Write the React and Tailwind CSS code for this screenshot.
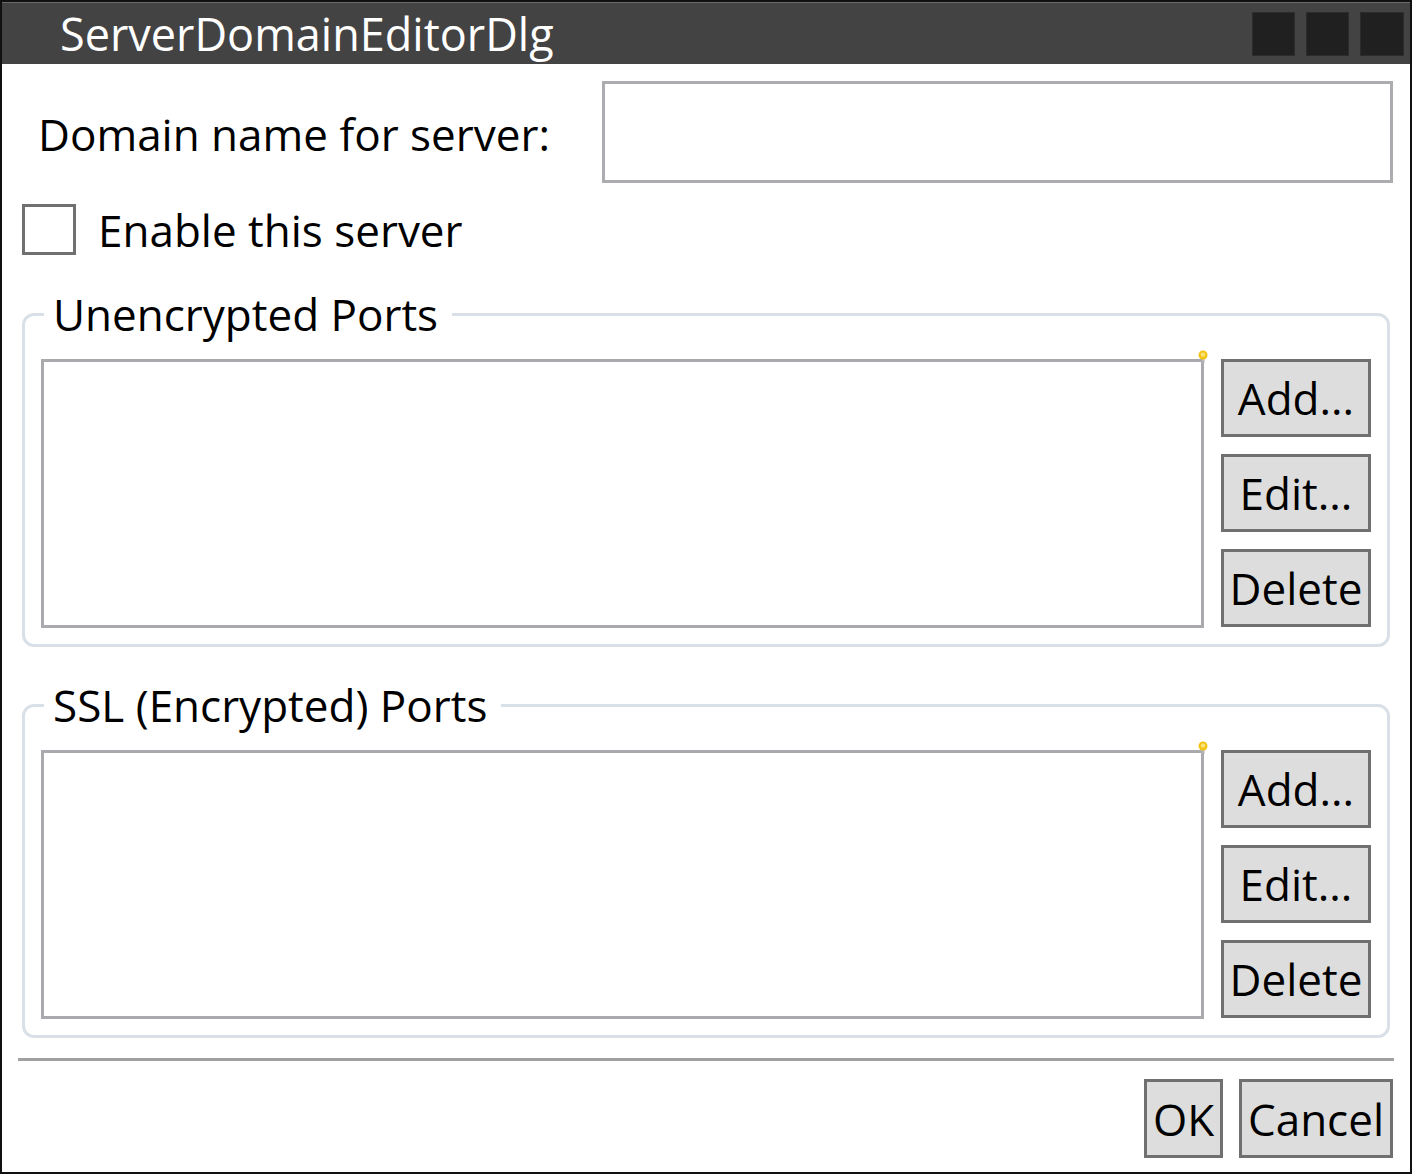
import React from 'react';

const FONT = { fontFamily: '"Open Sans", "Noto Sans", sans-serif' };

const Bulb = () => (
  <svg className="absolute -top-[12px] -right-[7px]" width="10" height="14" viewBox="0 0 10 14">
    <rect x="3.5" y="8" width="3" height="5" fill="#b4b4b4" />
    <circle cx="5" cy="5" r="4.5" fill="#f3c316" />
    <circle cx="5" cy="4.6" r="2.2" fill="#fbe27a" />
  </svg>
);

const SideButton = ({ label }) => (
  <button className="w-[150px] h-[78px] bg-[#dddddd] border-[3px] border-[#707070] text-[44px] leading-none text-black flex items-center justify-center">
    {label}
  </button>
);

const PortsGroup = ({ title }) => (
  <fieldset className="mx-[20px] border-[3px] border-[#d9e0e7] rounded-[12px] px-[16px] pt-[18px] pb-[16px]">
    <legend className="ml-[3px] pl-[9px] pr-[14px] text-[44px] leading-[54px] text-black">{title}</legend>
    <div className="flex gap-[17px]">
      <div className="relative flex-1 h-[269px] border-[3px] border-[#aaaaae] bg-white">
        <Bulb />
      </div>
      <div className="flex flex-col gap-[17px]">
        <SideButton label="Add..." />
        <SideButton label="Edit..." />
        <SideButton label="Delete" />
      </div>
    </div>
  </fieldset>
);

export default function App() {
  return (
    <div style={FONT} className="w-[1412px] h-[1174px] bg-white border-2 border-[#111111] flex flex-col overflow-hidden">
      {/* title bar */}
      <div className="h-[62px] bg-[#434343] border-t border-[#6a6a6a] flex items-center shrink-0">
        <span className="ml-[58px] text-[45px] leading-none text-white">ServerDomainEditorDlg</span>
        <div className="ml-auto mr-[6px] flex gap-[11px]">
          <div className="w-[43px] h-[44px] bg-[#202020] border border-[#2c2c2c]" />
          <div className="w-[43px] h-[44px] bg-[#202020] border border-[#2c2c2c]" />
          <div className="w-[44px] h-[44px] bg-[#202020] border border-[#2c2c2c]" />
        </div>
      </div>

      {/* domain row */}
      <div className="flex items-center mt-[17px]">
        <label className="ml-[36px] mt-[4px] text-[44px] leading-none text-black">Domain name for server:</label>
        <input className="ml-auto mr-[17px] w-[791px] h-[102px] border-[3px] border-[#acacb0] bg-white outline-none" />
      </div>

      {/* checkbox */}
      <div className="flex items-center mt-[21px] ml-[20px]">
        <div className="w-[54px] h-[51px] border-[3px] border-[#707070] bg-white" />
        <span className="ml-[22px] text-[44px] leading-none text-black">Enable this server</span>
      </div>

      <div className="mt-[32px]">
        <PortsGroup title="Unencrypted Ports" />
      </div>
      <div className="mt-[31px]">
        <PortsGroup title="SSL (Encrypted) Ports" />
      </div>

      {/* separator */}
      <div className="mt-[20px] mx-[16px] h-[3px] bg-[#a0a0a0]" />

      {/* footer buttons */}
      <div className="flex justify-end gap-[16px] mt-[18px] mr-[17px]">
        <button className="w-[79px] h-[79px] bg-[#dddddd] border-[3px] border-[#707070] text-[44px] leading-none text-black">OK</button>
        <button className="w-[154px] h-[79px] bg-[#dddddd] border-[3px] border-[#707070] text-[44px] leading-none text-black">Cancel</button>
      </div>
    </div>
  );
}
